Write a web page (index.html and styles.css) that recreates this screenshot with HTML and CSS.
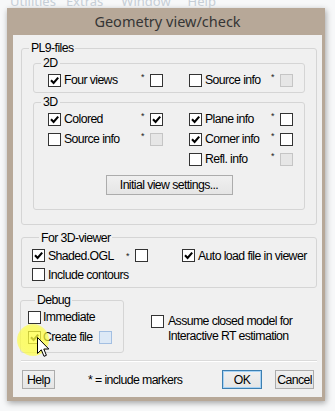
FILE: index.html
```html
<!DOCTYPE html>
<html>
<head>
<meta charset="utf-8">
<link rel="stylesheet" href="styles.css">
</head>
<body>
<div class="bgmenu"><span>Utilities</span><span>Extras</span><span>Window</span><span>Help</span></div>
<div class="window">
  <div class="titlebar">Geometry view/check</div>
  <div class="client">
    <div class="group pl9">
      <div class="legend">PL9-files</div>
      <div class="group sub g2d">
        <div class="legend">2D</div>
        <div class="opts">
          <div class="item left">
            <span class="cb"><svg viewBox="0 0 11 11"><path d="M2 5.3l2.6 2.7L9.2 2.6"/></svg></span>
            <span class="lbl">Four views</span><span class="star">*</span><span class="box"></span>
          </div>
          <div class="item right">
            <span class="cb"></span>
            <span class="lbl">Source info</span><span class="star">*</span><span class="box dis"></span>
          </div>
        </div>
      </div>
      <div class="group sub g3d">
        <div class="legend">3D</div>
        <div class="opts">
          <div class="item left">
            <span class="cb"><svg viewBox="0 0 11 11"><path d="M2 5.3l2.6 2.7L9.2 2.6"/></svg></span>
            <span class="lbl">Colored</span><span class="star">*</span><span class="box"><svg viewBox="0 0 11 11"><path d="M2 5.3l2.6 2.7L9.2 2.6"/></svg></span>
          </div>
          <div class="item right">
            <span class="cb"><svg viewBox="0 0 11 11"><path d="M2 5.3l2.6 2.7L9.2 2.6"/></svg></span>
            <span class="lbl">Plane info</span><span class="star">*</span><span class="box"></span>
          </div>
          <div class="item left">
            <span class="cb"></span>
            <span class="lbl">Source info</span><span class="star">*</span><span class="box dis"></span>
          </div>
          <div class="item right">
            <span class="cb"><svg viewBox="0 0 11 11"><path d="M2 5.3l2.6 2.7L9.2 2.6"/></svg></span>
            <span class="lbl">Corner info</span><span class="star">*</span><span class="box"></span>
          </div>
          <div class="item left"></div>
          <div class="item right">
            <span class="cb"></span>
            <span class="lbl">Refl. info</span><span class="star">*</span><span class="box dis"></span>
          </div>
        </div>
        <div class="btn initial">Initial view settings...</div>
      </div>
    </div>

    <div class="group viewer">
      <div class="legend">For 3D-viewer</div>
      <div class="vrow">
        <div class="item shaded">
          <span class="cb"><svg viewBox="0 0 11 11"><path d="M2 5.3l2.6 2.7L9.2 2.6"/></svg></span>
          <span class="lbl">Shaded.OGL</span><span class="star">*</span><span class="box"></span>
        </div>
        <div class="item auto">
          <span class="cb"><svg viewBox="0 0 11 11"><path d="M2 5.3l2.6 2.7L9.2 2.6"/></svg></span>
          <span class="txt">Auto load file in viewer</span>
        </div>
      </div>
      <div class="vrow">
        <div class="item">
          <span class="cb"></span>
          <span class="txt">Include contours</span>
        </div>
      </div>
    </div>

    <div class="bottom">
      <div class="group debug">
        <div class="legend">Debug</div>
        <div class="drow">
          <span class="cb"></span><span class="txt">Immediate</span>
        </div>
        <div class="drow">
          <span class="cb hl"><svg viewBox="0 0 11 11"><path d="M2 5.3l2.6 2.7L9.2 2.6"/></svg></span><span class="txt">Create file</span><span class="box blue"></span>
        </div>
      </div>
      <div class="assume">
        <span class="cb"></span>
        <span class="txt">Assume closed model for<br>Interactive RT estimation</span>
      </div>
    </div>

    <div class="sep"></div>

    <div class="buttons">
      <div class="btn help">Help</div>
      <span class="note">* = include markers</span>
      <div class="btn ok">OK</div>
      <div class="btn cancel">Cancel</div>
    </div>
  </div>
</div>
<div class="highlight"></div>
<svg class="cursor" width="13" height="21" viewBox="0 0 13 21"><path d="M0.5 0.5 L0.5 16.5 L4.3 12.8 L7 19.3 L9.4 18.3 L6.8 12 L11.8 12 Z" fill="#fff" stroke="#000" stroke-width="1" stroke-linejoin="round"/></svg>
</body>
</html>
```

FILE: styles.css
```css
html, body {
  margin: 0;
  padding: 0;
}
body {
  width: 335px;
  height: 411px;
  overflow: hidden;
  background: #f7f8f9;
  font-family: "Liberation Sans", Arial, sans-serif;
  font-size: 12.3px;
  letter-spacing: -0.6px;
  color: #000;
  position: relative;
  white-space: nowrap;
}
.bgmenu {
  height: 8px;
  overflow: hidden;
  display: flex;
  font-family: "Noto Sans", sans-serif;
  font-size: 13px;
  letter-spacing: 0;
  color: #c6ced6;
  line-height: 14px;
}
.bgmenu span {
  margin-top: -6px;
}
.bgmenu span:nth-child(1) { margin-left: 10px; }
.bgmenu span:nth-child(2) { margin-left: 10px; }
.bgmenu span:nth-child(3) { margin-left: 18px; }
.bgmenu span:nth-child(4) { margin-left: 17px; }

.window {
  margin-left: 7px;
  width: 318px;
  box-sizing: border-box;
  background: #b7a898;
  padding: 0 3px 4px 6px;
  box-shadow: 1px 2px 6px rgba(0, 0, 0, 0.35);
}
.titlebar {
  height: 27px;
  display: flex;
  align-items: center;
  justify-content: center;
  font-family: "Noto Sans", "Open Sans", sans-serif;
  font-size: 14.5px;
  letter-spacing: 0;
  color: #353535;
  padding-bottom: 1px;
  box-sizing: border-box;
}
.client {
  background: #f0f0f0;
  height: 362px;
  box-sizing: border-box;
  padding: 13px 5px 0 8px;
  display: flex;
  flex-direction: column;
}
.group {
  border: 1px solid #d5d5d5;
  border-radius: 3px;
  display: flex;
  flex-direction: column;
  align-items: flex-start;
}
.legend {
  margin: -8px 0 0 7px;
  padding: 0 2px;
  height: 15px;
  line-height: 15px;
  background: #f0f0f0;
}
.pl9 {
  padding-bottom: 14px;
}
.sub {
  align-self: stretch;
  margin: 0 11px;
}
.g2d {
  margin-top: 7px;
  padding-bottom: 2px;
}
.g3d {
  margin-top: 9px;
  padding-bottom: 14px;
}
.sub .legend {
  margin-bottom: -1px;
}
.opts {
  display: grid;
  grid-template-columns: 141px 105px;
  grid-auto-rows: 20px;
  padding-left: 14px;
}
.item {
  display: flex;
  align-items: center;
}
.cb, .box {
  width: 13px;
  height: 13px;
  box-sizing: border-box;
  border: 1px solid #333;
  background: #fff;
  flex: none;
  display: flex;
  align-items: center;
  justify-content: center;
}
.cb svg, .box svg {
  width: 11px;
  height: 11px;
}
.cb path, .box path {
  fill: none;
  stroke: #000;
  stroke-width: 2.1;
}
.box.dis {
  background: #e6e6e6;
  border-color: #c5c5c5;
}
.box.blue {
  background: #dde9f6;
  border-color: #a3bfe2;
  margin-left: auto;
}
.lbl {
  margin-left: 3px;
}
.left .lbl {
  width: 77px;
}
.right .lbl {
  width: 66px;
}
.star {
  width: 9px;
  font-size: 9px;
  line-height: 9px;
  align-self: flex-start;
  margin-top: 3px;
  color: #222;
}
.btn {
  box-sizing: border-box;
  height: 19px;
  border: 1px solid #acacac;
  background: linear-gradient(#f0f0f0, #e5e5e5);
  display: flex;
  align-items: center;
  justify-content: center;
}
.initial {
  align-self: center;
  width: 127px;
  height: 20px;
  margin-top: 6px;
}
.viewer {
  margin-top: 12px;
  padding: 1px 0 3px 10px;
}
.vrow {
  display: flex;
  height: 19px;
  align-items: center;
}
.shaded .lbl {
  width: 78px;
}
.auto {
  margin-left: 34px;
}
.txt {
  margin-left: 3px;
}
.bottom {
  display: flex;
  margin-top: 12px;
  align-items: flex-start;
}
.debug {
  width: 104px;
  box-sizing: border-box;
  margin-left: -1px;
  padding: 0 0 5px 7px;
}
.debug .legend {
  margin-bottom: -1px;
}
.drow {
  display: flex;
  align-items: center;
  height: 20px;
  width: 84px;
}
.drow .txt {
  margin-left: 2px;
}
.assume {
  display: flex;
  align-items: flex-start;
  margin: 15px 0 0 27px;
}
.assume .txt {
  line-height: 15px;
  margin-top: -1px;
  margin-left: 4px;
}
.sep {
  margin-top: 7px;
  border-top: 1px solid #dadada;
  border-bottom: 1px solid #fff;
}
.buttons {
  display: flex;
  align-items: center;
  margin-top: 8px;
  padding: 0 3px 0 1px;
}
.help {
  width: 33px;
}
.note {
  margin-left: 33px;
}
.ok {
  margin-left: auto;
  width: 40px;
  border-color: #3c7fb1;
  box-shadow: inset 0 0 0 1px #a6d2f5;
}
.cancel {
  margin-left: 13px;
  width: 39px;
}
.highlight {
  position: absolute;
  left: 17px;
  top: 324px;
  width: 32px;
  height: 32px;
  border-radius: 50%;
  background: radial-gradient(circle, rgba(255, 255, 70, 0.8) 0%, rgba(255, 255, 60, 0.7) 60%, rgba(255, 255, 80, 0.2) 100%);
}
.cursor {
  position: absolute;
  left: 37px;
  top: 337px;
}
```
